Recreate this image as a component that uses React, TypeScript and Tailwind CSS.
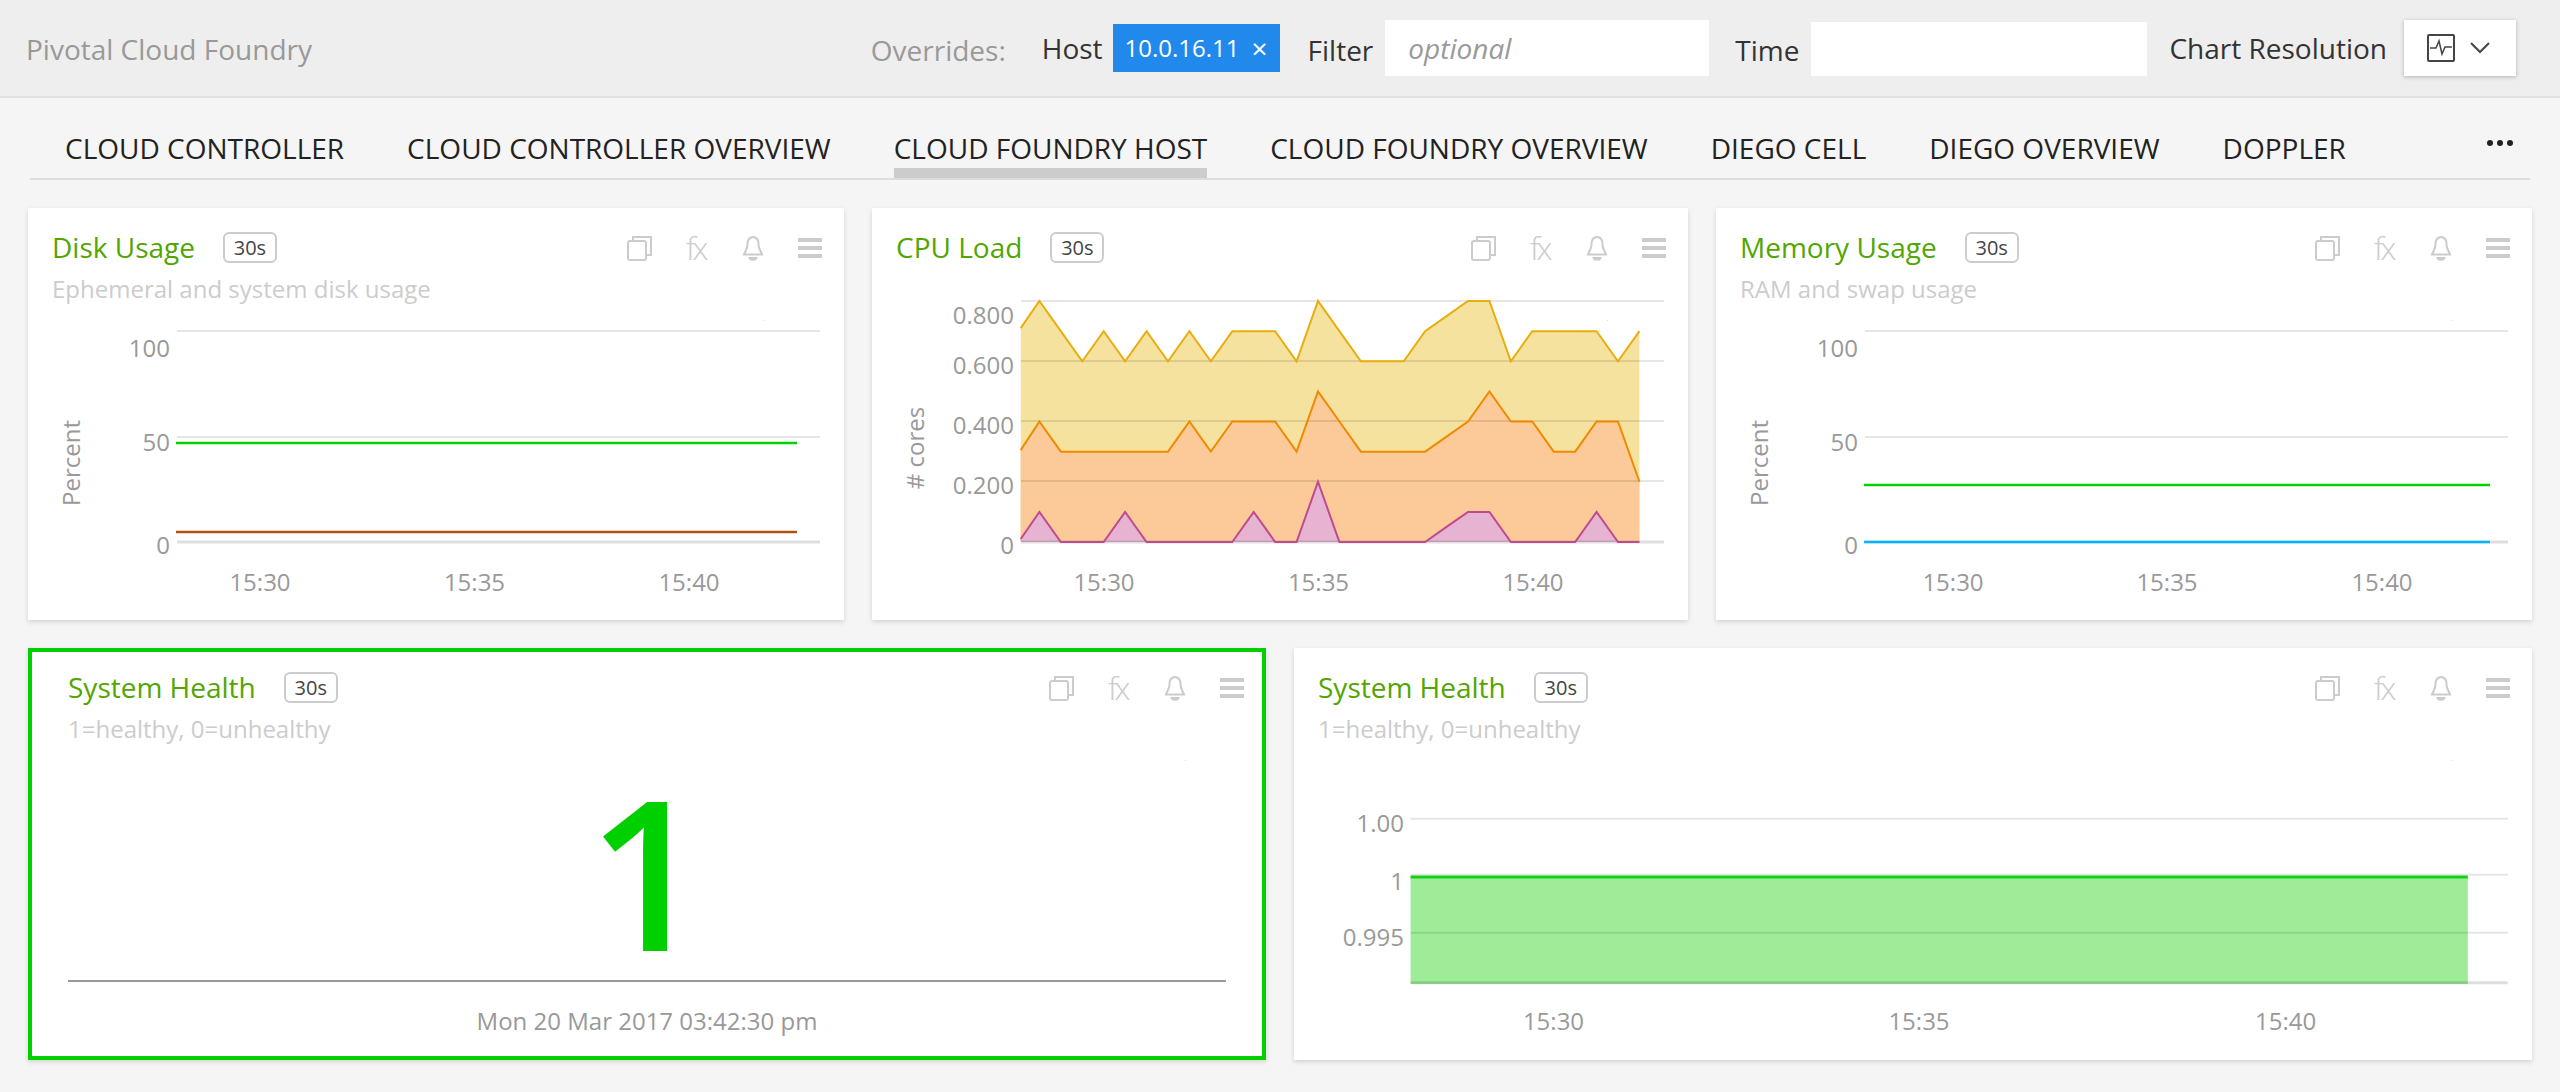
import { ReactNode } from 'react'

const TABS = [
  'CLOUD CONTROLLER',
  'CLOUD CONTROLLER OVERVIEW',
  'CLOUD FOUNDRY HOST',
  'CLOUD FOUNDRY OVERVIEW',
  'DIEGO CELL',
  'DIEGO OVERVIEW',
  'DOPPLER',
]

const YELLOW = [0.71, 0.8, 0.7, 0.6, 0.7, 0.6, 0.7, 0.6, 0.7, 0.6, 0.7, 0.7, 0.7, 0.6, 0.8, 0.7, 0.6, 0.6, 0.6, 0.7, 0.75, 0.8, 0.8, 0.6, 0.7, 0.7, 0.7, 0.7, 0.6, 0.7]
const ORANGE = [0.305, 0.4, 0.3, 0.3, 0.3, 0.3, 0.3, 0.3, 0.4, 0.3, 0.4, 0.4, 0.4, 0.3, 0.5, 0.4, 0.3, 0.3, 0.3, 0.3, 0.35, 0.4, 0.5, 0.4, 0.4, 0.3, 0.3, 0.4, 0.4, 0.2]
const PINK = [0.01, 0.1, 0, 0, 0, 0.1, 0, 0, 0, 0, 0, 0.1, 0, 0, 0.2, 0, 0, 0, 0, 0, 0.05, 0.1, 0.1, 0, 0, 0, 0, 0.1, 0, 0]

// chart coordinates are relative to the card, the svg starts 84px down
function cpuPoints(values: number[]): string {
  return values
    .map((v, i) => {
      const x = i === 0 ? 148.7 : 167.4 + (i - 1) * 21.43
      return `${x},${334 - v * 301.25}`
    })
    .join(' ')
}

function ChartFrame({ width, children }: { width: number; children: ReactNode }) {
  return (
    <svg
      width={width}
      height={328}
      viewBox={`0 84 ${width} 328`}
      className="absolute left-0 bottom-0 block fill-[#999] text-[24px]"
    >
      {children}
    </svg>
  )
}

function Grid({ x1, x2, lines }: { x1: number; x2: number; lines: number[] }) {
  return (
    <>
      {lines.map((y, i) => (
        <line
          key={y}
          x1={x1}
          x2={x2}
          y1={y}
          y2={y}
          stroke="#000"
          strokeOpacity={i === lines.length - 1 ? 0.13 : 0.1}
          strokeWidth={i === lines.length - 1 ? 3 : 2}
        />
      ))}
    </>
  )
}

function YLabels({ x, labels }: { x: number; labels: [string, number][] }) {
  return (
    <>
      {labels.map(([text, y]) => (
        <text key={text} x={x} y={y} textAnchor="end">
          {text}
        </text>
      ))}
    </>
  )
}

function XLabels({ xs, y }: { xs: number[]; y: number }) {
  const times = ['15:30', '15:35', '15:40']
  return (
    <>
      {times.map((t, i) => (
        <text key={t} x={xs[i]} y={y} textAnchor="middle">
          {t}
        </text>
      ))}
    </>
  )
}

function AxisTitle({ text, y }: { text: string; y: number }) {
  return (
    <text x={52} y={y} textAnchor="middle" transform={`rotate(-90 52 ${y})`}>
      {text}
    </text>
  )
}

function PercentChart({
  labelXs,
  lines,
  endX,
}: {
  labelXs: number[]
  lines: { y: number; color: string }[]
  endX: number
}) {
  return (
    <ChartFrame width={816}>
      <Grid x1={149} x2={792} lines={[123, 229, 334]} />
      <YLabels
        x={142}
        labels={[
          ['100', 148.5],
          ['50', 242.5],
          ['0', 345.5],
        ]}
      />
      <XLabels xs={labelXs} y={382.5} />
      <AxisTitle text="Percent" y={255} />
      {lines.map((l) => (
        <line key={l.color} x1={148} x2={endX} y1={l.y} y2={l.y} stroke={l.color} strokeWidth={2.5} />
      ))}
    </ChartFrame>
  )
}

function CpuChart() {
  const areaEnd = '767.4,334 148.7,334'
  return (
    <ChartFrame width={816}>
      <polygon points={`${cpuPoints(YELLOW)} ${areaEnd}`} fill="#f5e29e" />
      <polygon points={`${cpuPoints(ORANGE)} ${areaEnd}`} fill="#fbca98" />
      <polygon points={`${cpuPoints(PINK)} ${areaEnd}`} fill="#e6b4d2" />
      <Grid x1={149} x2={792} lines={[93, 153, 213, 273, 334]} />
      <polyline points={cpuPoints(YELLOW)} fill="none" stroke="#e8ae10" strokeWidth={2} />
      <polyline points={cpuPoints(ORANGE)} fill="none" stroke="#f08a00" strokeWidth={2} />
      <polyline points={cpuPoints(PINK)} fill="none" stroke="#c04a8e" strokeWidth={2} />
      <YLabels
        x={142}
        labels={[
          ['0.800', 115.5],
          ['0.600', 165.5],
          ['0.400', 225.5],
          ['0.200', 285.5],
          ['0', 345.5],
        ]}
      />
      <XLabels xs={[232, 446.5, 661]} y={382.5} />
      <AxisTitle text="# cores" y={240} />
    </ChartFrame>
  )
}

function HealthChart() {
  return (
    <ChartFrame width={1238}>
      <rect x={116.6} y={229} width={1057.2} height={107} fill="#9eec98" />
      <Grid x1={116.6} x2={1213.8} lines={[170.7, 226.7, 284.7, 334.7]} />
      <line x1={116.6} x2={1173.8} y1={229} y2={229} stroke="#16d016" strokeWidth={3} />
      <YLabels
        x={110}
        labels={[
          ['1.00', 183.5],
          ['1', 242],
          ['0.995', 297.5],
        ]}
      />
      <XLabels xs={[259.5, 625, 991.7]} y={381.5} />
    </ChartFrame>
  )
}

function CopyIcon() {
  return (
    <svg width="25" height="26" viewBox="0 0 25 26" fill="none" stroke="#ccc" strokeWidth="2">
      <rect x="1" y="6" width="18" height="19" rx="2" />
      <path d="M6 6V2h18v18h-5" />
    </svg>
  )
}

function BellIcon() {
  return (
    <svg width="22" height="26" viewBox="0 0 22 26" fill="none" stroke="#ccc" strokeWidth="2">
      <path d="M11 2C7 2 5.5 5.5 5.5 9.5 5.5 14 3 16 2 19.5h18C19 16 16.5 14 16.5 9.5 16.5 5.500 15 2 11 2Z" />
      <path d="M6 22h10l-2 3.500H8Z" fill="#ccc" stroke="none" />
    </svg>
  )
}

function PanelActions() {
  return (
    <div className="ml-auto flex items-center gap-[34px] h-[26px] mt-[3px]">
      <CopyIcon />
      <span className="w-[22px] font-light text-[32px] leading-[26px] tracking-[-3px] text-[#ccc]">fx</span>
      <BellIcon />
      <div className="w-6 flex flex-col gap-[4px]">
        <span className="h-1 bg-[#ccc]" />
        <span className="h-1 bg-[#ccc]" />
        <span className="h-1 bg-[#ccc]" />
      </div>
    </div>
  )
}

function Panel({
  title,
  subtitle,
  selected = false,
  children,
}: {
  title: string
  subtitle?: string
  selected?: boolean
  children: ReactNode
}) {
  return (
    <div
      className={`relative h-[412px] bg-white shadow-[0_2px_5px_rgba(0,0,0,0.14)] pt-6 pr-[22px] ${
        selected ? 'pl-10 outline-4 -outline-offset-4 outline-[#00d000]' : 'pl-6'
      }`}
    >
      <div className="relative z-10 flex items-start">
        <span className="-mt-px text-[28px] leading-8 text-[#52a600]">{title}</span>
        <span className="ml-7 h-[31px] w-[54px] flex items-center justify-center rounded-md border-2 border-[#ccc] text-[20px] text-[#444]">
          30s
        </span>
        <PanelActions />
      </div>
      {subtitle && <div className="relative z-10 mt-[10px] text-[24px] leading-8 text-[#ccc]">{subtitle}</div>}
      <span className="absolute right-20 top-[112px] size-px bg-[#ddd]" />
      {children}
    </div>
  )
}

function HealthValue() {
  return (
    <div className="absolute left-10 right-10 bottom-0 flex flex-col items-center">
      <div className="w-full border-b-2 border-[#999] pb-[34px] flex justify-center">
        <div className="h-[150px] text-[208px] leading-[150px] font-semibold text-[#00d000]">1</div>
      </div>
      <div className="h-[78px] flex items-center text-[24px] text-[#999]">Mon 20 Mar 2017 03:42:30 pm</div>
    </div>
  )
}

export default function App() {
  return (
    <div className="min-h-screen bg-[#f5f5f5] font-['Open_Sans',sans-serif]">
      <header className="h-[98px] bg-[#eee] border-b-2 border-[#e0e0e0] flex items-center pl-[26px] text-[28px]">
        <span className="mt-[2px] text-[#999]">Pivotal Cloud Foundry</span>
        <span className="ml-auto mt-[3px] text-[#999]">Overrides:</span>
        <span className="ml-9 text-[#333]">Host</span>
        <span className="ml-[10px] h-12 w-[167px] flex items-center justify-between px-3 bg-[#2189ec] text-white text-[24px]">
          <span>10.0.16.11</span>
          <span className="text-[28px]">×</span>
        </span>
        <span className="ml-7 mt-1 text-[#333]">Filter</span>
        <div className="ml-3 h-14 w-[324px] bg-white flex items-center pl-[23px] italic text-[#999]">
          optional
        </div>
        <span className="ml-[26px] mt-1 text-[#333]">Time</span>
        <div className="ml-3 h-[54px] w-[336px] mt-[2px] bg-white" />
        <span className="ml-[22px] text-[#333]">Chart Resolution</span>
        <button className="ml-[17px] mr-11 h-14 w-28 bg-white shadow-[0_1px_4px_rgba(0,0,0,0.25)] flex items-center pl-[23px] gap-[15px]">
          <svg width="28" height="28" viewBox="0 0 28 28" fill="none" stroke="#444" strokeWidth="2">
            <rect x="1" y="1" width="26" height="26" rx="1" />
            <path d="M3 14h6l3-7 3 13 3-7h7" strokeWidth="1.500" />
          </svg>
          <svg width="20" height="12" viewBox="0 0 20 12" fill="none" stroke="#444" strokeWidth="2">
            <path d="M1 1l9 9 9-9" />
          </svg>
        </button>
      </header>

      <nav className="mx-[30px] h-[82px] pt-5 border-b-2 border-[#ddd] flex items-stretch pl-[35px] gap-[63px] text-[28px] text-[#222]">
        {TABS.map((tab) => (
          <div
            key={tab}
            className={`flex items-center whitespace-nowrap ${
              tab === 'CLOUD FOUNDRY HOST' ? 'border-b-[10px] border-[#ccc] pt-[10px]' : ''
            }`}
          >
            {tab}
          </div>
        ))}
        <div className="ml-auto mr-[17px] flex items-center gap-[4px] pb-[10px]">
          <span className="size-[6px] rounded-full bg-[#222]" />
          <span className="size-[6px] rounded-full bg-[#222]" />
          <span className="size-[6px] rounded-full bg-[#222]" />
        </div>
      </nav>

      <main className="px-7 pt-7 flex flex-col gap-7">
        <div className="grid grid-cols-3 gap-7">
          <Panel title="Disk Usage" subtitle="Ephemeral and system disk usage">
            <PercentChart
              labelXs={[232, 446.5, 661]}
              endX={769}
              lines={[
                { y: 235, color: '#00d000' },
                { y: 324, color: '#b5500f' },
              ]}
            />
          </Panel>
          <Panel title="CPU Load">
            <CpuChart />
          </Panel>
          <Panel title="Memory Usage" subtitle="RAM and swap usage">
            <PercentChart
              labelXs={[237, 451, 666]}
              endX={774}
              lines={[
                { y: 277, color: '#00d000' },
                { y: 334, color: '#00b4ff' },
              ]}
            />
          </Panel>
        </div>
        <div className="grid grid-cols-2 gap-7">
          <Panel title="System Health" subtitle="1=healthy, 0=unhealthy" selected>
            <HealthValue />
          </Panel>
          <Panel title="System Health" subtitle="1=healthy, 0=unhealthy">
            <HealthChart />
          </Panel>
        </div>
      </main>
    </div>
  )
}
